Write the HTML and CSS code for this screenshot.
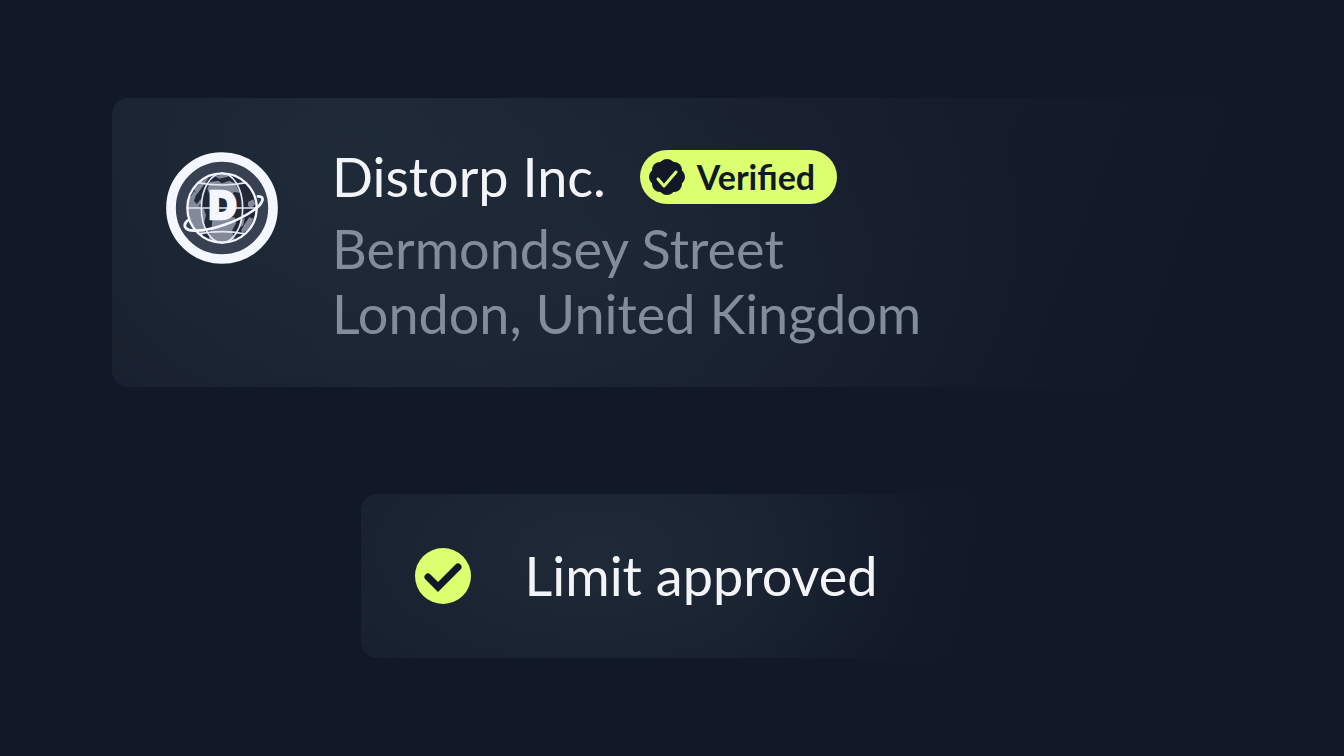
FILE: index.html
```html
<!DOCTYPE html>
<html lang="en">

<head>
    <meta charset="UTF-8">
    <meta name="viewport" content="width=device-width, initial-scale=1.0">
    <title>Distorp Inc.</title>
    <link rel="stylesheet" href="styles.css">
</head>

<body>
    <main class="main">
        <!-- Company card -->
        <section class="card company">
            <svg class="logo" viewBox="0 0 336 336" aria-hidden="true">
                <circle class="logo-ring" cx="168" cy="168" r="153" />
                <!-- Globe -->
                <circle class="logo-ocean" cx="168" cy="168" r="104" />
                <g class="logo-land">
                    <path d="M66 148 L84 118 L92 124 L84 146 L92 156 L104 142 L110 150 L98 162 L114 172 L120 190 L114 214 L118 238 L108 250 Q60 220 64 168 Z" />
                    <path d="M84 112 L110 84 L128 78 L116 96 L104 112 L92 128 Z" />
                    <path d="M132 90 L156 86 L168 94 L190 86 L206 94 L214 108 L222 122 L204 120 L198 128 L130 124 L124 112 Z" />
                    <path d="M146 72 L180 66 L186 74 L160 80 Z" />
                    <path d="M140 196 L206 196 L210 214 L198 236 L206 262 Q168 284 128 260 L136 232 Z" />
                    <path d="M246 150 L262 142 L268 156 L256 168 L246 162 Z" />
                    <path d="M222 206 L236 198 L232 220 L222 226 Z" />
                    <path d="M236 216 L250 196 L262 200 L250 228 L228 246 L226 234 Z" />
                </g>
                <g class="logo-grid">
                    <ellipse cx="168" cy="168" rx="62" ry="104" />
                    <path d="M64 168 H272 M94 92 Q168 106 242 92 M98 246 Q168 232 238 246" />
                </g>
                <circle class="logo-outline" cx="168" cy="168" r="104" />
                <text class="logo-letter" x="170" y="202" text-anchor="middle">D</text>
                <path class="logo-orbit" d="M66 205 C48 220 56 235 84 236 C136 238 216 208 264 174 C290 156 300 132 276 133" />
            </svg>
            <div class="details">
                <div class="title-row">
                    <h1 class="name">Distorp Inc.</h1>
                    <span class="badge">
                        <svg class="badge-icon" viewBox="0 0 36 36" aria-hidden="true">
                            <g class="seal">
                                <circle cx="18" cy="18" r="15" />
                                <circle cx="18" cy="8" r="8" />
                                <circle cx="25" cy="11" r="8" />
                                <circle cx="28" cy="18" r="8" />
                                <circle cx="25" cy="25" r="8" />
                                <circle cx="18" cy="28" r="8" />
                                <circle cx="11" cy="25" r="8" />
                                <circle cx="8" cy="18" r="8" />
                                <circle cx="11" cy="11" r="8" />
                            </g>
                            <path class="seal-check" d="M9 20 L15 27 L27 13" />
                        </svg>
                        Verified
                    </span>
                </div>
                <address class="address">
                    Bermondsey Street<br>
                    London, United Kingdom
                </address>
            </div>
        </section>

        <!-- Limit status -->
        <section class="card status">
            <svg class="status-icon" viewBox="0 0 56 56" aria-hidden="true">
                <circle cx="28" cy="28" r="28" />
                <path d="M13 29 L23 39 L43 19" />
            </svg>
            <p class="status-text">Limit approved</p>
        </section>
    </main>
</body>

</html>
```
FILE: styles.css
```css
body {
    font-family: Lato, sans-serif;
    background-color: #111827;
    color: #f3f4f8;
    margin: 0;
}

.main {
    display: flex;
    flex-direction: column;
    gap: 107px;
    padding: 98px 112px;
}

.card {
    display: flex;
    gap: 54px;
    border-radius: 16px;
    font-size: 54px;
    line-height: 64px;
}

/* Company card */
.company {
    align-items: flex-start;
    padding: 48px 54px 41px;
    background:
        radial-gradient(ellipse 34% 110% at 22% 20%, rgba(32, 43, 57, 0.9), transparent),
        radial-gradient(ellipse 42% 100% at 42% 60%, rgba(31, 42, 56, 0.7), transparent),
        linear-gradient(110deg, #19212f 0%, #171e2d 55%, #111827 92%);
}

.logo {
    width: 112px;
    height: 112px;
    margin-top: 6px;
    flex-shrink: 0;
}

.logo-ring {
    fill: #374151;
    stroke: #f4f7ff;
    stroke-width: 29;
}

.logo-ocean {
    fill: #1f2937;
}

.logo-land {
    fill: #828999;
}

.logo-grid {
    fill: none;
    stroke: #e4e8f2;
    stroke-width: 5;
}

.logo-outline {
    fill: none;
    stroke: #f4f7ff;
    stroke-width: 7;
}

.logo-letter {
    fill: #f4f7ff;
    stroke: #f4f7ff;
    stroke-width: 8;
    font-family: Inter, sans-serif;
    font-size: 116px;
    font-weight: 800;
}

.logo-orbit {
    fill: none;
    stroke: #f4f7ff;
    stroke-width: 8;
    stroke-linecap: round;
}

.title-row {
    display: flex;
    align-items: center;
    gap: 34px;
    margin-bottom: 8px;
}

.name {
    margin: 0;
    font-size: 54px;
    font-weight: 400;
    line-height: 62px;
}

.badge {
    display: flex;
    align-items: center;
    gap: 12px;
    padding: 0 22px 0 9px;
    border-radius: 27px;
    background-color: #dcff70;
    color: #111827;
    font-size: 34px;
    font-weight: 700;
    line-height: 54px;
}

.badge-icon {
    width: 36px;
    height: 36px;
}

.seal {
    fill: #111827;
}

.seal-check {
    fill: none;
    stroke: #dcff70;
    stroke-width: 3;
    stroke-linecap: round;
    stroke-linejoin: round;
}

.address {
    color: #828c9b;
    font-style: normal;
    line-height: 65px;
}

/* Limit status */
.status {
    align-items: center;
    align-self: center;
    padding: 50px 106px 50px 54px;
    background:
        radial-gradient(ellipse 55% 110% at 38% 35%, rgba(32, 43, 57, 0.9), transparent),
        linear-gradient(100deg, #171f2e 0%, #161e2c 60%, #111827 96%);
}

.status-icon {
    width: 56px;
    height: 56px;
    fill: #dcff70;
}

.status-icon path {
    fill: none;
    stroke: #111827;
    stroke-width: 7;
    stroke-linecap: round;
}

.status-text {
    margin: 0;
}
```
